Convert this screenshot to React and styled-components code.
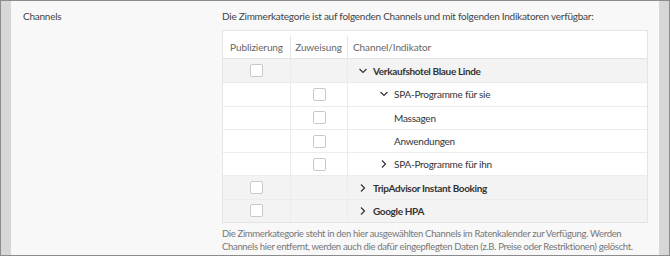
import React from "react";
import styled, { createGlobalStyle } from "styled-components";

const Global = createGlobalStyle`
  html, body { margin: 0; padding: 0; background: #fff; }
  body { font-family: "Lato", "Noto Sans", sans-serif; letter-spacing: -0.25px; }
  * { box-sizing: border-box; }
`;

const Frame = styled.div`
  width: 670px;
  height: 256px;
  border: 1px solid #8c8c8c;
  background: #d7d7d7;
  padding: 0 10px 0 10px;
  display: flex;
`;

const Panel = styled.div`
  flex: 1;
  background: #f8f8f8;
  display: grid;
  grid-template-columns: 199px 1fr;
  padding: 8px 11px 0 12px;
`;

const Label = styled.div`
  font-size: 10px;
  color: #444;
  line-height: 14px;
`;

const Content = styled.div`
  display: flex;
  flex-direction: column;
`;

const Intro = styled.div`
  font-size: 10px;
  color: #444;
  line-height: 14px;
  margin-bottom: 7px;
  white-space: nowrap;
`;

const Table = styled.div`
  background: #fff;
  border: 1px solid #e4e4e4;
  display: grid;
  grid-template-columns: 67px 57px 1fr;
`;

const HeadCell = styled.div`
  height: 28px;
  padding-top: 5px;
  border-bottom: 1px solid #e4e4e4;
  font-size: 10px;
  letter-spacing: -0.1px;
  color: #666;
  display: flex;
  align-items: center;
  justify-content: ${(p) => (p.$left ? "flex-start" : "center")};
  padding-left: ${(p) => (p.$left ? "6px" : "0")};
  position: relative;
  &::before {
    content: "";
    display: ${(p) => (p.$first ? "none" : "block")};
    position: absolute;
    left: 0;
    top: 5px;
    bottom: 0;
    border-left: 1px solid #e4e4e4;
  }
`;

const Cell = styled.div`
  height: 23.3px;
  background: ${(p) => (p.$shade ? "#f3f3f3" : "#fff")};
  border-top: ${(p) => (p.$top ? "1px solid #ececec" : "none")};
  border-left: ${(p) => (p.$first ? "none" : "1px solid #ececec")};
  display: flex;
  align-items: center;
  justify-content: ${(p) => (p.$left ? "flex-start" : "center")};
  padding-left: ${(p) => p.$indent || 0}px;
  font-size: 10px;
  color: #333;
  font-weight: ${(p) => (p.$bold ? 700 : 400)};
  letter-spacing: ${(p) => (p.$bold ? "-0.35px" : "-0.25px")};
`;

const Box = styled.span`
  width: 13px;
  height: 13px;
  border: 1px solid #c9c9c9;
  border-radius: 2px;
  background: #fff;
  display: inline-block;
`;

const Chevron = styled.svg`
  width: 10px;
  height: 10px;
  margin-right: 5px;
  flex: none;
`;

const Footer = styled.div`
  font-size: 9.5px;
  letter-spacing: -0.33px;
  color: #777;
  line-height: 13px;
  margin-top: 4px;
`;

const Chev = ({ open }) => (
  <Chevron viewBox="0 0 10 10">
    {open ? (
      <polyline points="1.5,3 5,6.5 8.5,3" fill="none" stroke="#333" strokeWidth="1.2" />
    ) : (
      <polyline points="3,1.5 6.5,5 3,8.5" fill="none" stroke="#333" strokeWidth="1.2" />
    )}
  </Chevron>
);

const rows = [
  { pub: true, zuw: false, shade: true, indent: 10, chev: "open", bold: true, text: "Verkaufshotel Blaue Linde" },
  { pub: false, zuw: true, shade: false, indent: 31, chev: "open", text: "SPA-Programme für sie" },
  { pub: false, zuw: true, shade: false, indent: 46, text: "Massagen" },
  { pub: false, zuw: true, shade: false, indent: 46, text: "Anwendungen" },
  { pub: false, zuw: true, shade: false, indent: 31, chev: "closed", text: "SPA-Programme für ihn" },
  { pub: true, zuw: false, shade: true, indent: 10, chev: "closed", bold: true, text: "TripAdvisor Instant Booking" },
  { pub: true, zuw: false, shade: true, indent: 10, chev: "closed", bold: true, text: "Google HPA" },
];

export default function App() {
  return (
    <>
      <Global />
      <Frame>
        <Panel>
          <Label>Channels</Label>
          <Content>
            <Intro>Die Zimmerkategorie ist auf folgenden Channels und mit folgenden Indikatoren verfügbar:</Intro>
            <Table>
              <HeadCell $first>Publizierung</HeadCell>
              <HeadCell>Zuweisung</HeadCell>
              <HeadCell $left>Channel/Indikator</HeadCell>
              {rows.map((r, i) => (
                <React.Fragment key={i}>
                  <Cell $first $shade={r.shade} $top={i > 0}>{r.pub && <Box />}</Cell>
                  <Cell $shade={r.shade} $top={i > 0}>{r.zuw && <Box />}</Cell>
                  <Cell $left $shade={r.shade} $top={i > 0} $indent={r.indent} $bold={r.bold}>
                    {r.chev && <Chev open={r.chev === "open"} />}
                    {r.text}
                  </Cell>
                </React.Fragment>
              ))}
            </Table>
            <Footer>
              Die Zimmerkategorie steht in den hier ausgewählten Channels im Ratenkalender zur Verfügung. Werden Channels hier entfernt, werden auch die dafür eingepflegten Daten (z.B. Preise oder Restriktionen) gelöscht.
            </Footer>
          </Content>
        </Panel>
      </Frame>
    </>
  );
}
